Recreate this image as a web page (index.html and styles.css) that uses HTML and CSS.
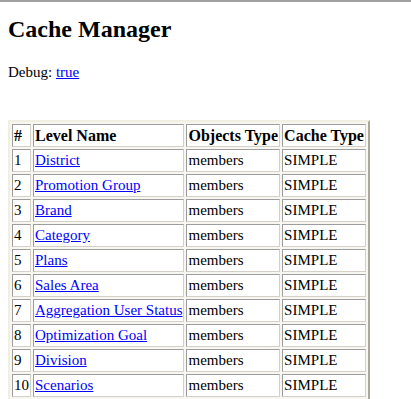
FILE: index.html
```html
<!DOCTYPE html>
<html lang="en">
<head>
    <meta charset="UTF-8">
    <title>Cache Manager</title>
    <link rel="stylesheet" href="styles.css">
</head>
<body>
    <h1 class="title">Cache Manager</h1>
    <p class="debug">Debug: <a href="#">true</a></p>

    <table class="cache-table">
        <tr>
            <th>#</th>
            <th>Level Name</th>
            <th>Objects Type</th>
            <th>Cache Type</th>
        </tr>
        <tr><td>1</td><td><a href="#">District</a></td><td>members</td><td>SIMPLE</td></tr>
        <tr><td>2</td><td><a href="#">Promotion Group</a></td><td>members</td><td>SIMPLE</td></tr>
        <tr><td>3</td><td><a href="#">Brand</a></td><td>members</td><td>SIMPLE</td></tr>
        <tr><td>4</td><td><a href="#">Category</a></td><td>members</td><td>SIMPLE</td></tr>
        <tr><td>5</td><td><a href="#">Plans</a></td><td>members</td><td>SIMPLE</td></tr>
        <tr><td>6</td><td><a href="#">Sales Area</a></td><td>members</td><td>SIMPLE</td></tr>
        <tr><td>7</td><td><a href="#">Aggregation User Status</a></td><td>members</td><td>SIMPLE</td></tr>
        <tr><td>8</td><td><a href="#">Optimization Goal</a></td><td>members</td><td>SIMPLE</td></tr>
        <tr><td>9</td><td><a href="#">Division</a></td><td>members</td><td>SIMPLE</td></tr>
        <tr><td>10</td><td><a href="#">Scenarios</a></td><td>members</td><td>SIMPLE</td></tr>
        <tr><td>&nbsp;</td><td>&nbsp;</td><td>&nbsp;</td><td>&nbsp;</td></tr>
    </table>
</body>
</html>
```

FILE: styles.css
```css
html {
    border-top: 2px solid #a0a0a0;
}

body {
    margin: 0;
    padding: 13px 8px 0;
    background: #fff;
    color: #000;
    font-family: "Liberation Serif", "Times New Roman", serif;
    font-size: 15px;
}

a {
    color: #0000ff;
}

.title {
    margin: 0;
    font-size: 24px;
    line-height: 28px;
    font-weight: bold;
}

.debug {
    margin: 20px 0 0;
    line-height: 18px;
}

.cache-table {
    margin-top: 39px;
    border-collapse: separate;
    border-spacing: 2px;
    border: 2px solid;
    border-color: #f1efe2 #aca899 #aca899 #f1efe2;
    background: #f7f6f1;
}

.cache-table th,
.cache-table td {
    padding: 1px;
    line-height: 19px;
    text-align: left;
    white-space: nowrap;
    background: #fff;
    border: 1px solid;
    border-color: #9d9d9d #d4d0c8 #d4d0c8 #9d9d9d;
}

.cache-table th {
    font-size: 16px;
    font-weight: bold;
}
```
